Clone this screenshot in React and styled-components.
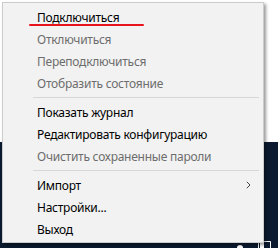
import styled, { createGlobalStyle } from "styled-components";

const GlobalStyle = createGlobalStyle`
  html, body {
    margin: 0;
    padding: 0;
    width: 278px;
    height: 248px;
    overflow: hidden;
  }
  body {
    font-family: "Noto Sans", "Open Sans", sans-serif;
  }
`;

const Desktop = styled.div`
  position: relative;
  display: flex;
  flex-direction: column;
  width: 278px;
  height: 248px;
`;

const WindowArea = styled.div`
  height: 142px;
  background: #ffffff;
`;

const Wallpaper = styled.div`
  flex: 1;
  display: flex;
  align-items: flex-end;
  justify-content: flex-end;
  background: #0b1a2f;
`;

const Tray = styled.div`
  display: flex;
  align-items: flex-end;
  gap: 14px;
  padding-right: 7px;
`;

const Menu = styled.ul`
  position: absolute;
  left: 2px;
  top: 2px;
  width: 256px;
  margin: 0;
  padding: 3px 2px 2px;
  list-style: none;
  background: #f2f2f2;
  border: 1px solid #cccccc;
  box-shadow: 2px 2px 3px rgba(0, 0, 0, 0.4);
`;

const Item = styled.li`
  position: relative;
  display: flex;
  align-items: center;
  justify-content: space-between;
  height: 22px;
  padding: 0 10px 0 32px;
  font-size: 12px;
  letter-spacing: -0.25px;
  color: ${(props) => (props.disabled ? "#6d6d6d" : "#000000")};
  white-space: nowrap;
`;

const Mark = styled.span`
  position: absolute;
  left: 24px;
  top: 18px;
  width: 115px;
  height: 2px;
  background: #e8131b;
  border-radius: 1px;
`;

const Separator = styled.li`
  height: 1px;
  margin: 3px 2px 3px 28px;
  background: #d7d7d7;
`;

const Chevron = () => (
  <svg width="5" height="8" viewBox="0 0 5 8">
    <path d="M0.8 0.8 L4 4 L0.8 7.2" fill="none" stroke="#444" strokeWidth="1" />
  </svg>
);

function App() {
  return (
    <Desktop>
      <GlobalStyle />
      <WindowArea />
      <Wallpaper>
        <Tray>
          <svg width="8" height="4" viewBox="0 0 8 4">
            <circle cx="4" cy="4" r="3" fill="#ffffff" />
          </svg>
          <svg width="13" height="7" viewBox="0 0 13 7">
            <path d="M0.5 7 V0.5 H12.5 V7" fill="none" stroke="#ffffff" strokeWidth="1" />
            <rect x="2" y="2" width="4" height="5" fill="#ffffff" />
          </svg>
        </Tray>
      </Wallpaper>
      <Menu>
        <Item>
          Подключиться
          <Mark />
        </Item>
        <Item disabled>Отключиться</Item>
        <Item disabled>Переподключиться</Item>
        <Item disabled>Отобразить состояние</Item>
        <Separator />
        <Item>Показать журнал</Item>
        <Item>Редактировать конфигурацию</Item>
        <Item disabled>Очистить сохраненные пароли</Item>
        <Separator />
        <Item>
          Импорт
          <Chevron />
        </Item>
        <Item>Настройки...</Item>
        <Item>Выход</Item>
      </Menu>
    </Desktop>
  );
}

export default App;
